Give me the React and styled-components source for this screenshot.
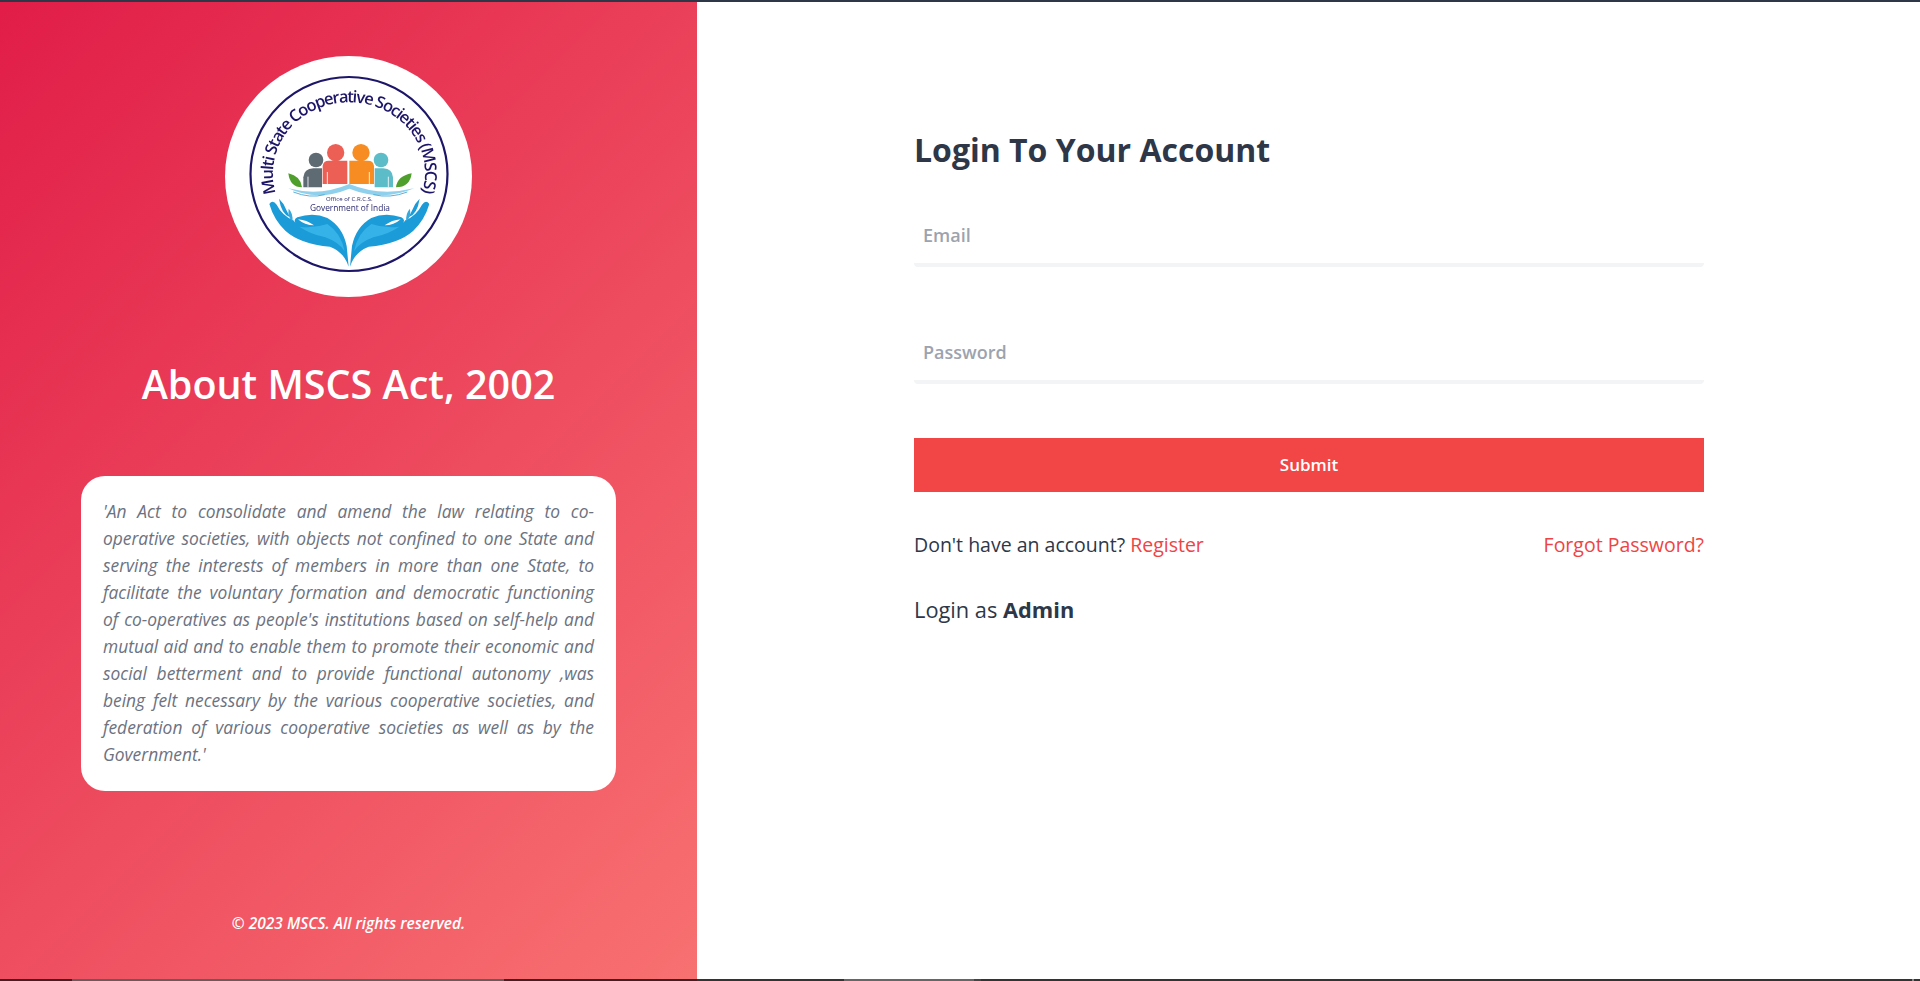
import styled, { createGlobalStyle } from 'styled-components'

const GlobalStyle = createGlobalStyle`
  * { box-sizing: border-box; }
  html, body { margin: 0; padding: 0; height: 100%; background: #fff; }
  body { font-family: 'Open Sans', 'Noto Sans', sans-serif; overflow: hidden; }
`

const Page = styled.div`
  height: 981px;
  display: flex;
  flex-direction: column;
  overflow: hidden;
`

const TopLine = styled.div`
  height: 2px;
  background: #2d3748;
  flex: none;
`

const BottomLine = styled.div`
  height: 2px;
  flex: none;
  background: linear-gradient(
    90deg,
    #3a2226 0 72px,
    #5f5f5f 72px 504px,
    #3a2226 504px 697px,
    #333 697px 844px,
    #666 844px 974px,
    #444 974px 981px,
    #333 981px 1912px,
    #888 1912px 1914px,
    #333 1914px
  );
`

const Main = styled.div`
  flex: 1;
  display: flex;
  min-height: 0;
`

const Left = styled.aside`
  width: 697px;
  flex: none;
  display: flex;
  flex-direction: column;
  align-items: center;
  padding-top: 54px;
  background: linear-gradient(135deg, #e11d48 0%, #f87171 100%);
`

const LogoDisc = styled.div`
  width: 247px;
  height: 241px;
  flex: none;
  border-radius: 50%;
  background: #fff;
`

const LogoSvg = styled.svg`
  display: block;
  filter: blur(0.35px);
`

const AboutTitle = styled.h2`
  margin: 63px 0 0;
  font-size: 39.5px;
  line-height: 48px;
  font-weight: 600;
  color: #fff;
`

const QuoteCard = styled.div`
  width: 535px;
  height: 315px;
  flex: none;
  margin-top: 68px;
  padding: 22px;
  border-radius: 24px;
  background: #fff;
`

const Quote = styled.p`
  margin: 0;
  font-size: 17.4px;
  line-height: 27px;
  font-style: italic;
  color: #6b7280;
`

const QuoteLine = styled.span`
  display: block;
  white-space: nowrap;
  text-align: justify;
  text-align-last: ${(props) => (props.$last ? 'left' : 'justify')};
`

const Copyright = styled.p`
  margin: 122px 0 0;
  font-size: 15.5px;
  line-height: 21px;
  font-weight: 600;
  font-style: italic;
  color: #fff;
`

const Right = styled.main`
  flex: 1;
  padding: 128px 0 0 217px;
`

const Form = styled.form`
  width: 790px;
`

const Heading = styled.h1`
  margin: 0 0 38px;
  font-size: 32px;
  line-height: 40px;
  font-weight: 700;
  color: #2d3748;
`

const Fields = styled.div`
  display: flex;
  flex-direction: column;
  gap: 58px;
  margin-bottom: 54px;
`

const Field = styled.input`
  display: block;
  width: 100%;
  height: 59px;
  padding: 0 9px 2px;
  border: 0;
  border-bottom: 4px solid #f3f4f6;
  border-radius: 4px;
  outline: none;
  background: #fff;
  font-family: inherit;
  font-size: 18px;
  font-weight: 600;
  &::placeholder {
    color: #9ca3af;
    opacity: 1;
  }
`

const Submit = styled.button`
  display: block;
  width: 100%;
  height: 54px;
  padding: 0 0 2px;
  border: 0;
  background: #f24646;
  color: #fff;
  font-family: inherit;
  font-size: 17px;
  font-weight: 600;
`

const LinksRow = styled.div`
  display: flex;
  justify-content: space-between;
  margin: 40px 0 0;
  font-size: 19.5px;
  line-height: 26px;
  color: #2d3748;
`

const TextLink = styled.a`
  color: #ef4444;
  text-decoration: none;
`

const AdminLine = styled.div`
  margin: 38px 0 0;
  font-size: 21.8px;
  line-height: 28px;
  font-weight: 500;
  color: #2d3748;
  b {
    font-weight: 700;
  }
`

const NAVY = '#1c1568'

const QUOTE_LINES = [
  "'An Act to consolidate and amend the law relating to co-",
  'operative societies, with objects not confined to one State and',
  'serving the interests of members in more than one State, to',
  'facilitate the voluntary formation and democratic functioning',
  "of co-operatives as people's institutions based on self-help and",
  'mutual aid and to enable them to promote their economic and',
  'social betterment and to provide functional autonomy ,was',
  'being felt necessary by the various cooperative societies, and',
  'federation of various cooperative societies as well as by the',
  "Government.'",
]

// hand is drawn once in the crop's 3x coordinates and mirrored around x=418
const Hand = ({ flip }) => (
  <g transform={flip ? 'translate(836 0) scale(-1 1)' : undefined}>
    <path
      d="M178 492 Q188 478 200 494 Q216 526 250 541 L256 548 Q250 538 262 532 Q310 516 352 534 Q398 560 410 618 L416 680 Q402 636 360 620 Q270 612 226 572 Q192 540 178 492 Z"
      fill="#1b9bd8"
    />
    <path
      d="M352 552 Q394 580 404 634 Q386 606 346 592 Q300 582 268 560 Q310 566 352 552 Z"
      fill="#35b3e8"
    />
    <path d="M264 538 Q290 540 312 556 Q284 556 264 538 Z" fill="#fff" />
    <path d="M207 476 Q222 490 228 508 L240 532 Q214 522 207 476 Z" fill="#1b9bd8" />
    <path d="M236 506 Q250 520 247 544 Q232 530 236 506 Z" fill="#35a9de" />
  </g>
)

const Person = ({ cx, cy, r, body, color }) => (
  <g>
    <circle cx={cx} cy={cy} r={r} fill={color} />
    <path d={body} fill={color} />
  </g>
)

const Logo = () => (
  <LogoSvg width="247" height="241" viewBox="0 0 247 241">
    <ellipse cx="124" cy="118" rx="98.5" ry="97" fill="none" stroke={NAVY} strokeWidth="2.2" />
    <defs>
      <path id="ring" d="M51 137 A76 71 0 1 1 197 137" />
    </defs>
    <text fontFamily="'Open Sans', sans-serif" fontSize="16.5" fontWeight="600" fill={NAVY}>
      <textPath href="#ring" textLength="270" lengthAdjust="spacing">
        Multi State Cooperative Societies (MSCS)
      </textPath>
    </text>

    <g transform="translate(-15 -16) scale(0.33333)">
      <Person
        cx={318}
        cy={360}
        r={22}
        color="#5f6b73"
        body="M280 442 V412 Q282 386 310 385 H336 V442 Z"
      />
      <Person
        cx={513}
        cy={360}
        r={22}
        color="#5cbcc8"
        body="M549 442 V412 Q547 386 520 385 H494 V442 Z"
      />
      <Person
        cx={377}
        cy={338}
        r={26}
        color="#ec5f55"
        body="M338 432 V378 Q340 362 356 362 H412 V432 Z"
      />
      <Person
        cx={453}
        cy={338}
        r={26}
        color="#f68c22"
        body="M418 432 V362 H474 Q490 362 492 378 V432 Z"
      />
      <path d="M352 396 V432 M478 396 V432 M294 410 V442 M535 410 V442" stroke="#fff" strokeWidth="2.5" />

      <path d="M235 400 Q272 408 276 442 Q240 442 235 400 Z" fill="#4f9f2d" />
      <path d="M605 400 Q562 408 558 442 Q600 442 605 400 Z" fill="#4f9f2d" />

      <path
        d="M235 445 Q330 470 418 432 Q510 470 612 445 Q520 486 418 446 Q320 486 235 445 Z"
        fill="#8fd0ec"
      />
      <path
        d="M250 456 Q300 476 344 464 M490 464 Q540 476 592 456"
        fill="none"
        stroke="#3f9fcf"
        strokeWidth="2.5"
      />

      <text x="418" y="484" textAnchor="middle" fontFamily="'Open Sans', sans-serif" fontSize="18" textLength="140" fill="#2b2a6e">
        Office of C.R.C.S.
      </text>
      <text x="420" y="513" textAnchor="middle" fontFamily="'Open Sans', sans-serif" fontSize="25" fontWeight="500" textLength="240" fill="#2b2a6e">
        Government of India
      </text>

      <Hand />
      <Hand flip />
    </g>
  </LogoSvg>
)

const App = () => (
  <Page>
    <GlobalStyle />
    <TopLine />
    <Main>
      <Left>
        <LogoDisc>
          <Logo />
        </LogoDisc>
        <AboutTitle>About MSCS Act, 2002</AboutTitle>
        <QuoteCard>
          <Quote>
            {QUOTE_LINES.map((line, i) => (
              <QuoteLine key={i} $last={i === QUOTE_LINES.length - 1}>
                {line}
              </QuoteLine>
            ))}
          </Quote>
        </QuoteCard>
        <Copyright>© 2023 MSCS. All rights reserved.</Copyright>
      </Left>
      <Right>
        <Form>
          <Heading>Login To Your Account</Heading>
          <Fields>
            <Field type="email" placeholder="Email" />
            <Field type="password" placeholder="Password" />
          </Fields>
          <Submit type="button">Submit</Submit>
          <LinksRow>
            <span>
              Don't have an account? <TextLink href="#">Register</TextLink>
            </span>
            <TextLink href="#">Forgot Password?</TextLink>
          </LinksRow>
          <AdminLine>
            Login as <b>Admin</b>
          </AdminLine>
        </Form>
      </Right>
    </Main>
    <BottomLine />
  </Page>
)

export default App
